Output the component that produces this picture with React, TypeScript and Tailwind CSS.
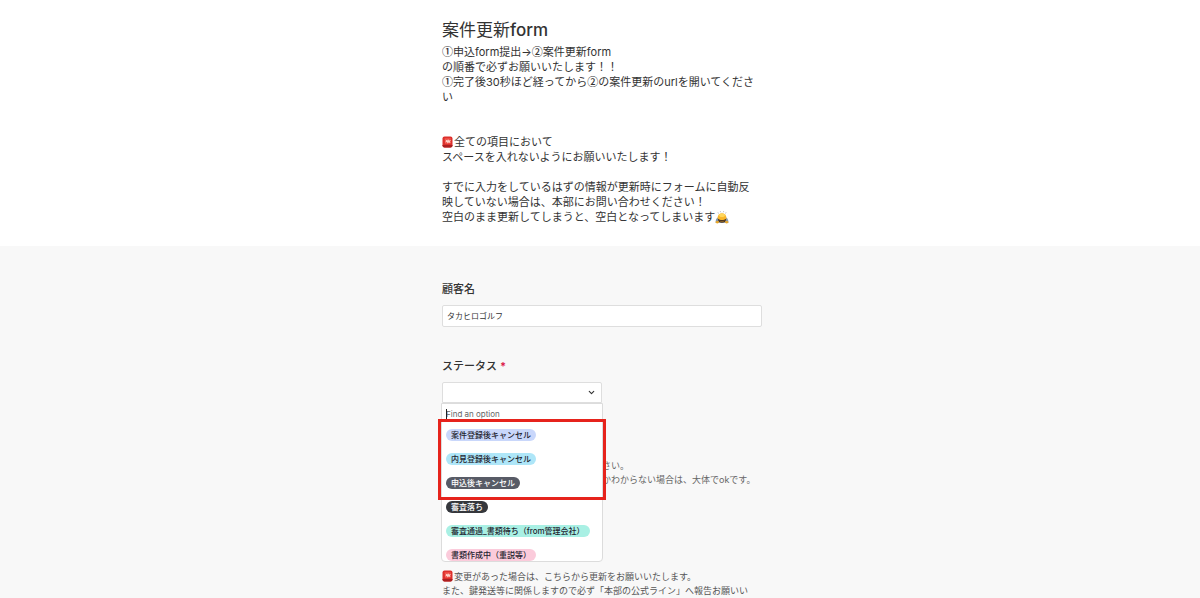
import { useState } from 'react'
import { ChevronDown } from 'lucide-react'

interface Opcao {
  nome: string
  classes: string
}

const OPCOES: Opcao[] = [
  { nome: '案件登録後キャンセル', classes: 'bg-[#c9d7fb] text-[#1f2430]' },
  { nome: '内見登録後キャンセル', classes: 'bg-[#aee6f8] text-[#1f2430]' },
  { nome: '申込後キャンセル', classes: 'bg-[#585b66] text-white' },
  { nome: '審査落ち', classes: 'bg-[#35373c] text-white' },
  { nome: '審査通過_書類待ち（from管理会社）', classes: 'bg-[#a9f0e4] text-[#1f2430]' },
  { nome: '書類作成中（重説等）', classes: 'bg-[#fbcbdb] text-[#1f2430]' },
]

// -----------------------------------------------------------------------------
// Emojis e números circulados
// -----------------------------------------------------------------------------

function Sirene() {
  return (
    <svg viewBox="0 0 24 24" className="inline-block h-3 w-3 align-[-2px]" role="img" aria-label="🚨">
      <rect x="1" y="1" width="20" height="22" rx="4" fill="#dc302c" />
      <path d="M5 4h13l-1 12H6z" fill="#ee4a42" />
      <path d="M7 7l4 2 1-3 2 3 4-1-2 3 1 3-4-1-2 2-1-3-4 1 2-3z" fill="#ffd2c8" />
      <path d="M1 18h20v1a4 4 0 01-4 4H5a4 4 0 01-4-4z" fill="#ab1f20" />
    </svg>
  )
}

function Reverencia() {
  return (
    <svg viewBox="0 0 24 24" className="inline-block h-3.5 w-3.5 align-[-3px]" role="img" aria-label="🙇">
      <path d="M5 4l1 2M9 2l1 2M15 2l-1 2M19 4l-1 2" stroke="#a5a5a5" strokeWidth="1.2" />
      <path d="M1 22c0-4 1-8 4-9h14c3 1 4 5 4 9z" fill="#8698aa" />
      <circle cx="12" cy="13" r="7.5" fill="#f9b62a" />
      <ellipse cx="12" cy="9" rx="5" ry="3" fill="#ffd75c" />
      <path d="M5 15c4 3 10 3 14 0 0 5-3 7-7 7s-7-2-7-7z" fill="#4a3320" />
      <path d="M8 18c2 2 6 2 8 0-1 3-7 3-8 0z" fill="#f9b62a" />
      <ellipse cx="4" cy="21" rx="3" ry="2" fill="#e9a626" />
      <ellipse cx="20" cy="21" rx="3" ry="2" fill="#e9a626" />
    </svg>
  )
}

function Passo({ numero }: { numero: string }) {
  return <span className="font-['Noto_Sans_CJK_JP',sans-serif] leading-none font-medium">{numero}</span>
}

// -----------------------------------------------------------------------------
// Lista de opções aberta sobre o formulário
// -----------------------------------------------------------------------------

function MenuStatus({ onEscolher }: { onEscolher: (nome: string) => void }) {
  const [busca, setBusca] = useState('')
  const visiveis = OPCOES.filter((o) => o.nome.includes(busca))

  return (
    <div className="absolute top-full -left-px z-10 w-[162px] rounded-b-sm border border-[#dcdcdc] bg-white">
      <div className="relative flex h-[19px] items-center px-1">
        <span className="absolute left-1 h-2.5 w-px bg-[#222]" />
        <input
          type="text"
          aria-label="Find an option"
          placeholder="Find an option"
          value={busca}
          onChange={(e) => setBusca(e.target.value)}
          className="w-full bg-transparent text-[8px] leading-3 outline-none placeholder:text-[#666]"
        />
      </div>
      <ul>
        {visiveis.map((o) => (
          <li key={o.nome} className="flex h-6 items-center px-1 last:h-[18px] last:items-end">
            <button
              type="button"
              onClick={() => onEscolher(o.nome)}
              className={['block rounded-full px-[5px] text-[8px] font-medium leading-3 whitespace-nowrap', o.classes].join(' ')}
            >
              {o.nome}
            </button>
          </li>
        ))}
      </ul>
      <div className="pointer-events-none absolute -inset-x-1 top-[15px] h-[81px] border-3 border-[#e6231c]" />
    </div>
  )
}

export default function App() {
  const [cliente, setCliente] = useState('タカヒロゴルフ')
  const [status, setStatus] = useState('')

  return (
    <div className="min-h-screen bg-[#f8f8f8] font-[Inter,'Noto_Sans_CJK_JP',sans-serif] text-[#333]" lang="ja">
      <header className="bg-white pt-[18px] pb-[21px]">
        <div className="mx-auto max-w-[324px] pl-1">
          <h1 className="mb-[3px] text-[17px] leading-6 font-medium">
            <span className="font-normal">案件更新</span>form
          </h1>
          <p className="text-[11px] leading-[15px] whitespace-nowrap">
            <Passo numero="①" />
            申込form提出→
            <Passo numero="②" />
            案件更新form
            <br />
            の順番で必ずお願いいたします！！
            <br />
            <Passo numero="①" />
            完了後30秒ほど経ってから
            <Passo numero="②" />
            の案件更新のurlを開いてくださ
            <br />
            い
            <br />
            <br />
            <br />
            <Sirene />
            全ての項目において
            <br />
            スペースを入れないようにお願いいたします！
            <br />
            <br />
            すでに入力をしているはずの情報が更新時にフォームに自動反
            <br />
            映していない場合は、本部にお問い合わせください！
            <br />
            空白のまま更新してしまうと、空白となってしまいます
            <Reverencia />
          </p>
        </div>
      </header>

      <main className="pt-[35px]">
        <form className="mx-auto max-w-[324px] pl-1">
          <label htmlFor="cliente" className="block text-[11px] leading-4 font-medium">
            顧客名
          </label>
          <input
            id="cliente"
            type="text"
            value={cliente}
            onChange={(e) => setCliente(e.target.value)}
            className="mt-2 block h-[22px] w-full rounded-xs border border-[#dedede] bg-white px-1 pb-0.5 text-[8px]"
          />

          <label htmlFor="status" className="mt-[31px] block text-[11px] leading-4 font-medium">
            ステータス <span className="font-bold text-[#dc1c4b]">*</span>
          </label>
          <div className="relative mt-2 w-40">
            <select
              id="status"
              value={status}
              onChange={(e) => setStatus(e.target.value)}
              className="block h-[21px] w-full appearance-none rounded-t-xs border border-[#dedede] bg-white px-1 text-[8px]"
            >
              <option value="" />
              {OPCOES.map((o) => (
                <option key={o.nome}>{o.nome}</option>
              ))}
            </select>
            <ChevronDown size={9} strokeWidth={3} className="pointer-events-none absolute top-1.5 right-1.5" />
            <MenuStatus onEscolher={setStatus} />
          </div>

          <p className="mt-14 pl-40 text-[9px] leading-[14px] whitespace-nowrap text-[#666]">
            さい。
            <br />
            かわからない場合は、大体でokです。
          </p>
          <p className="mt-[83px] text-[9px] leading-[14px] whitespace-nowrap text-[#555]">
            <Sirene />
            変更があった場合は、こちらから更新をお願いいたします。
            <br />
            また、鍵発送等に関係しますので必ず「本部の公式ライン」へ報告お願いい
          </p>
        </form>
      </main>
    </div>
  )
}
